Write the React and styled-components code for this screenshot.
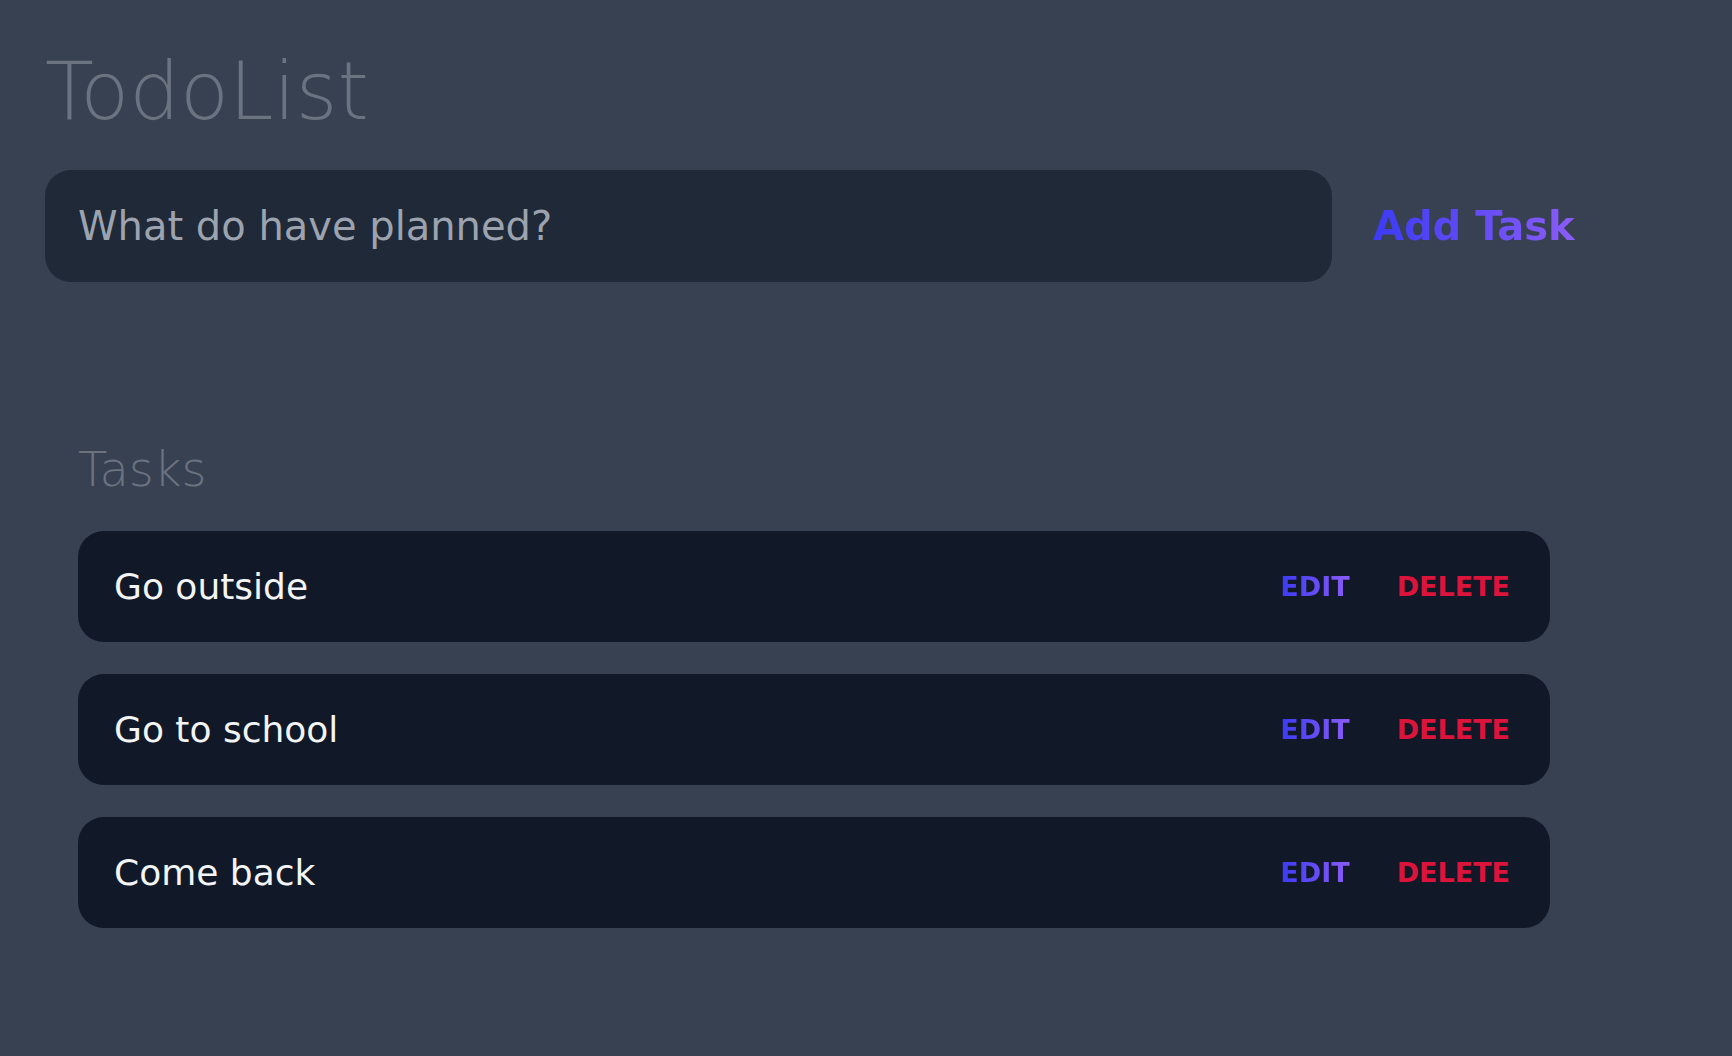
import React, { useState } from 'react';
import styled, { createGlobalStyle, css } from 'styled-components';

const GlobalStyle = createGlobalStyle`
  html, body {
    margin: 0;
    padding: 0;
    background: #374151;
    font-family: "DejaVu Sans", "Noto Sans", sans-serif;
  }
`;

const gradientText = css`
  background: linear-gradient(90deg, #3b3bf4, #8b5cf6);
  -webkit-background-clip: text;
  background-clip: text;
  color: transparent;
`;

const Page = styled.div`
  min-height: 1056px;
  box-sizing: border-box;
  padding: 45px 40px 40px 45px;
  background: #374151;
`;

const Title = styled.h1`
  margin: 0;
  font-size: 80px;
  font-weight: 200;
  line-height: normal;
  color: #6b7280;
`;

const Form = styled.form`
  display: flex;
  align-items: center;
  gap: 41px;
  margin-top: 32px;
`;

const TaskInput = styled.input`
  width: 1287px;
  height: 112px;
  box-sizing: border-box;
  padding: 0 33px;
  border: none;
  outline: none;
  border-radius: 26px;
  background: #1f2937;
  color: #e5e7eb;
  font-family: inherit;
  font-size: 40px;

  &::placeholder {
    color: #9ca3af;
  }
`;

const AddButton = styled.button`
  padding: 0;
  border: none;
  background: none;
  font-family: inherit;
  font-size: 40px;
  font-weight: 700;
  cursor: pointer;
  ${gradientText}
`;

const TaskSection = styled.section`
  margin-top: 159px;
  padding-left: 33px;
  width: 1472px;
`;

const SectionTitle = styled.h2`
  margin: 0 0 34px;
  font-size: 48px;
  font-weight: 200;
  line-height: normal;
  color: #6b7280;
`;

const TaskList = styled.div`
  display: flex;
  flex-direction: column;
  gap: 32px;
`;

const TaskRow = styled.div`
  display: flex;
  align-items: center;
  height: 111px;
  padding: 0 40px 0 36px;
  border-radius: 26px;
  background: #111827;
`;

const TaskText = styled.span`
  flex: 1;
  font-size: 36px;
  color: #f3f4f6;
`;

const Actions = styled.div`
  display: flex;
  align-items: center;
  gap: 47px;
`;

const ActionButton = styled.button`
  padding: 0;
  border: none;
  background: none;
  font-family: inherit;
  font-size: 27px;
  font-weight: 700;
  cursor: pointer;
  ${props =>
    props.variant === 'edit'
      ? gradientText
      : css`
          color: #dc143c;
        `}
`;

export default function App() {
  const [tasks] = useState(['Go outside', 'Go to school', 'Come back']);

  return (
    <Page>
      <GlobalStyle />
      <Title>TodoList</Title>
      <Form onSubmit={e => e.preventDefault()}>
        <TaskInput placeholder="What do have planned?" />
        <AddButton type="submit">Add Task</AddButton>
      </Form>
      <TaskSection>
        <SectionTitle>Tasks</SectionTitle>
        <TaskList>
          {tasks.map(task => (
            <TaskRow key={task}>
              <TaskText>{task}</TaskText>
              <Actions>
                <ActionButton variant="edit">EDIT</ActionButton>
                <ActionButton variant="delete">DELETE</ActionButton>
              </Actions>
            </TaskRow>
          ))}
        </TaskList>
      </TaskSection>
    </Page>
  );
}
